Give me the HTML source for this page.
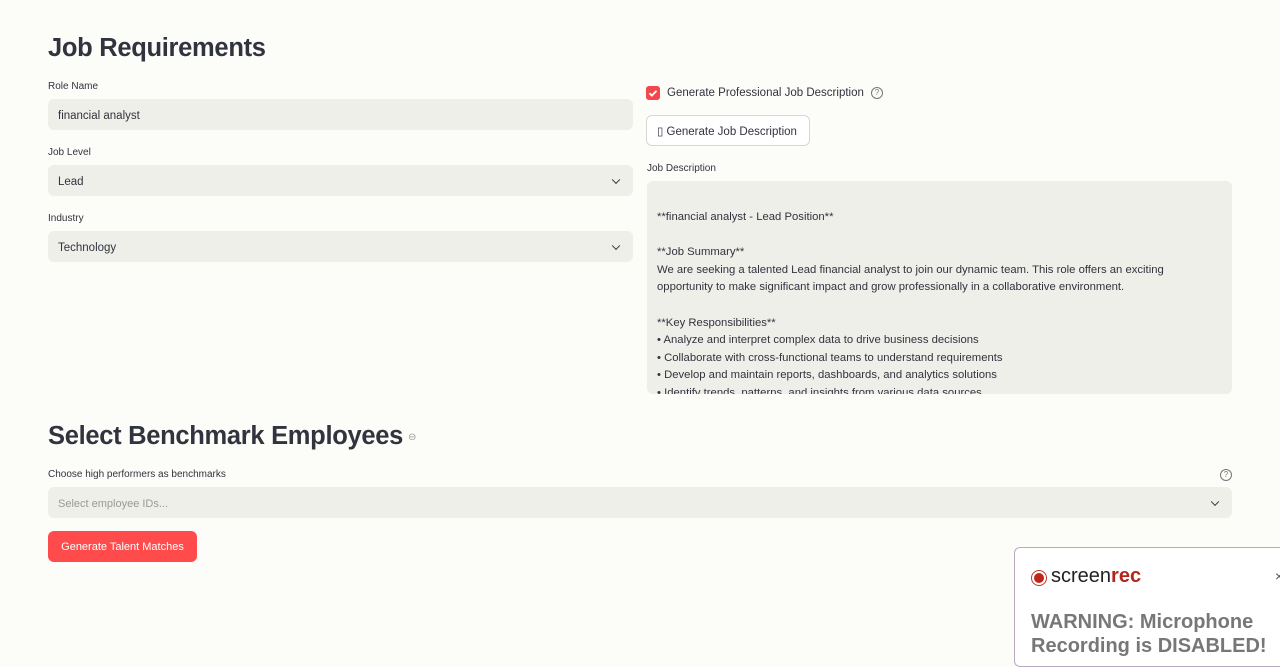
<!DOCTYPE html>
<html><head><meta charset="utf-8"><style>
*{box-sizing:border-box;margin:0;padding:0}
body{width:1280px;height:648px;overflow:hidden;background:#fcfcf8;font-family:"Liberation Sans",sans-serif;color:#31333f;position:relative}
.abs{position:absolute}
h1{position:absolute;font-size:25.5px;font-weight:bold;color:#31333f;letter-spacing:-0.3px}
.lbl{position:absolute;font-size:10px;color:#31333f}
.inp{position:absolute;background:#efefe9;border-radius:6px;font-size:11.5px;padding-left:10px;padding-top:2px;display:flex;align-items:center;color:#31333f}
.chev{position:absolute;right:14px;top:50%;width:6px;height:6px;border-right:1.6px solid #31333f;border-bottom:1.6px solid #31333f;transform:translateY(-70%) rotate(45deg)}
.jd{font-size:11.3px;line-height:17.6px;color:#31333f}
</style></head><body>
<h1 style="left:48px;top:34px">Job Requirements</h1>
<div class="lbl" style="left:48px;top:81px">Role Name</div>
<div class="inp" style="left:48px;top:99px;width:585px;height:31px">financial analyst</div>
<div class="lbl" style="left:48px;top:147px">Job Level</div>
<div class="inp" style="left:48px;top:165px;width:585px;height:31px">Lead<span class="chev"></span></div>
<div class="lbl" style="left:48px;top:213px">Industry</div>
<div class="inp" style="left:48px;top:231px;width:585px;height:31px">Technology<span class="chev"></span></div>

<div class="abs" style="left:646px;top:86px;width:14px;height:14px;background:#f0484c;border-radius:3px"><svg width="14" height="14"><path d="M3.5 7.2l2.4 2.4 4.6-4.8" stroke="#fff" stroke-width="1.8" fill="none"/></svg></div>
<div class="abs" style="left:667px;top:87px;font-size:11.5px">Generate Professional Job Description</div>
<div class="abs" style="left:871px;top:87px;width:12px;height:12px;border:1px solid #777;border-radius:50%;font-size:8px;text-align:center;line-height:10px;color:#777">?</div>
<div class="abs" style="left:646px;top:115px;width:164px;height:31px;border:1px solid #d8d8d0;border-radius:6px;font-size:11.5px;display:flex;align-items:center;padding-left:10px;padding-top:1px;background:#fff">▯ Generate Job Description</div>
<div class="lbl" style="left:647px;top:163px">Job Description</div>
<div class="abs" style="left:647px;top:181px;width:585px;height:213px;background:#efefe9;border-radius:6px;overflow:hidden;padding:28px 10px 0 10px">
<div class="jd">**financial analyst - Lead Position**<br><br>**Job Summary**<br>We are seeking a talented Lead financial analyst to join our dynamic team. This role offers an exciting<br>opportunity to make significant impact and grow professionally in a collaborative environment.<br><br>**Key Responsibilities**<br>• Analyze and interpret complex data to drive business decisions<br>• Collaborate with cross-functional teams to understand requirements<br>• Develop and maintain reports, dashboards, and analytics solutions<br>• Identify trends, patterns, and insights from various data sources</div></div>

<h1 style="left:48px;top:422px">Select Benchmark Employees</h1>
<div class="abs" style="left:408px;top:432px;font-size:10px;color:#999">⊖</div>
<div class="lbl" style="left:48px;top:469px">Choose high performers as benchmarks</div>
<div class="abs" style="left:1220px;top:469px;width:12px;height:12px;border:1px solid #777;border-radius:50%;font-size:8px;text-align:center;line-height:10px;color:#777">?</div>
<div class="inp" style="left:48px;top:487px;width:1184px;height:31px;color:#999;font-size:11px">Select employee IDs...<span class="chev"></span></div>
<div class="abs" style="left:48px;top:531px;width:149px;height:31px;background:#ff4b4b;border-radius:6px;color:#fff;font-size:11px;display:flex;align-items:center;justify-content:center;padding-top:1px">Generate Talent Matches</div>

<div class="abs" style="left:1014px;top:547px;width:280px;height:120px;border:1px solid #b9a9c0;border-radius:6px;background:#fff">
<div class="abs" style="left:16px;top:22px;width:16px;height:16px;border-radius:50%;border:1.5px solid #c0392b;display:flex;align-items:center;justify-content:center"><div style="width:10px;height:10px;border-radius:50%;background:#c0261c"></div></div>
<div class="abs" style="left:36px;top:17px;font-size:20px;color:#222">screen<span style="color:#b3261e;font-weight:bold">rec</span></div>
<div class="abs" style="left:16px;top:62px;font-size:20px;font-weight:bold;color:#777;line-height:24px;white-space:nowrap">WARNING: Microphone<br>Recording is DISABLED!</div>
<div class="abs" style="left:260px;top:20px;font-size:14px;color:#555">×</div>
</div>
</body></html>
